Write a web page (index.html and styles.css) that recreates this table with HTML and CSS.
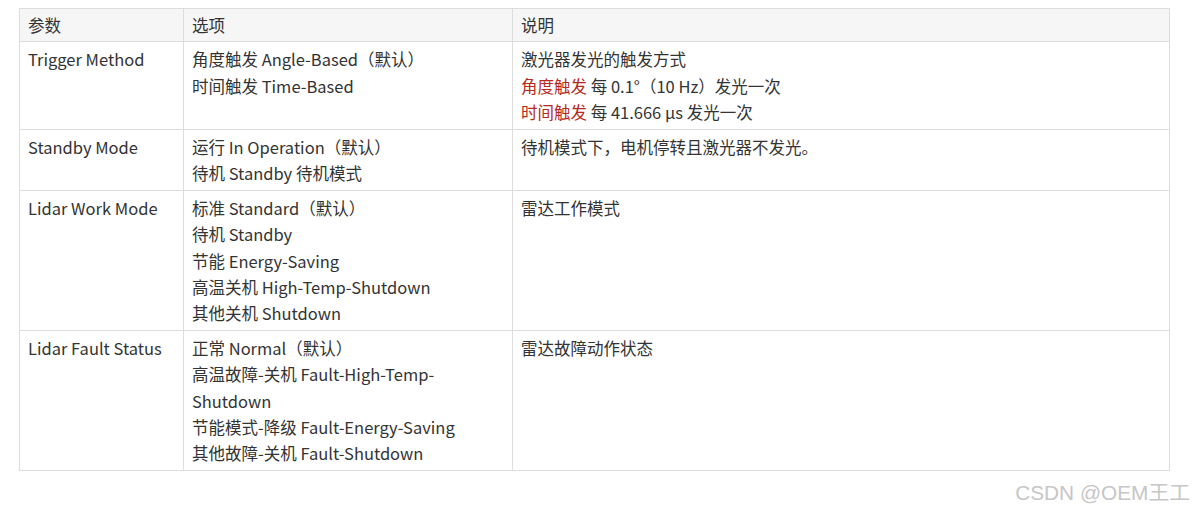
FILE: index.html
```html
<!DOCTYPE html>
<html lang="zh-CN">
<head>
<meta charset="utf-8">
<link rel="stylesheet" href="styles.css">
</head>
<body>
<div class="page">
<table class="spec">
  <colgroup>
    <col class="c1"><col class="c2"><col class="c3">
  </colgroup>
  <thead>
    <tr><th>参数</th><th>选项</th><th>说明</th></tr>
  </thead>
  <tbody>
    <tr>
      <td>Trigger Method</td>
      <td>角度触发 Angle-Based（默认）<br>时间触发 Time-Based</td>
      <td>激光器发光的触发方式<br><span class="red">角度触发</span> 每 0.1°（10 Hz）发光一次<br><span class="red">时间触发</span> 每 41.666 μs 发光一次</td>
    </tr>
    <tr>
      <td>Standby Mode</td>
      <td>运行 In Operation（默认）<br>待机 Standby 待机模式</td>
      <td>待机模式下，电机停转且激光器不发光。</td>
    </tr>
    <tr>
      <td>Lidar Work Mode</td>
      <td>标准 Standard（默认）<br>待机 Standby<br>节能 Energy-Saving<br>高温关机 High-Temp-Shutdown<br>其他关机 Shutdown</td>
      <td>雷达工作模式</td>
    </tr>
    <tr>
      <td>Lidar Fault Status</td>
      <td>正常 Normal（默认）<br>高温故障-关机 Fault-High-Temp-Shutdown<br>节能模式-降级 Fault-Energy-Saving<br>其他故障-关机 Fault-Shutdown</td>
      <td>雷达故障动作状态</td>
    </tr>
  </tbody>
</table>
<div class="watermark">CSDN @OEM王工</div>
</div>
</body>
</html>
```
FILE: styles.css
```css
html, body {
  margin: 0;
  padding: 0;
  background: #fff;
}
.page {
  padding: 8px 0 0 19px;
  position: relative;
  height: 513px;
  box-sizing: border-box;
}
.spec {
  border-collapse: collapse;
  table-layout: fixed;
  width: 1150px;
  font-family: "Noto Sans CJK SC", "Noto Sans", sans-serif;
  font-size: 16.5px;
  line-height: 26.25px;
  color: #333;
}
.c1 { width: 164px; }
.c2 { width: 329px; }
.c3 { width: 657px; }
.spec th, .spec td {
  border: 1px solid #dddddd;
  text-align: left;
  vertical-align: top;
  padding: 4px 8px 3.75px 8px;
  font-weight: normal;
}
.spec th {
  background: #f6f6f6;
  padding: 3px 8px 3px 8px;
}
.red {
  color: #b52a1d;
}
.watermark {
  position: absolute;
  right: 6px;
  top: 480px;
  font-family: "Liberation Sans", "Noto Sans CJK SC", sans-serif;
  font-size: 20.8px;
  line-height: 26px;
  color: #c6c6c6;
}
```
